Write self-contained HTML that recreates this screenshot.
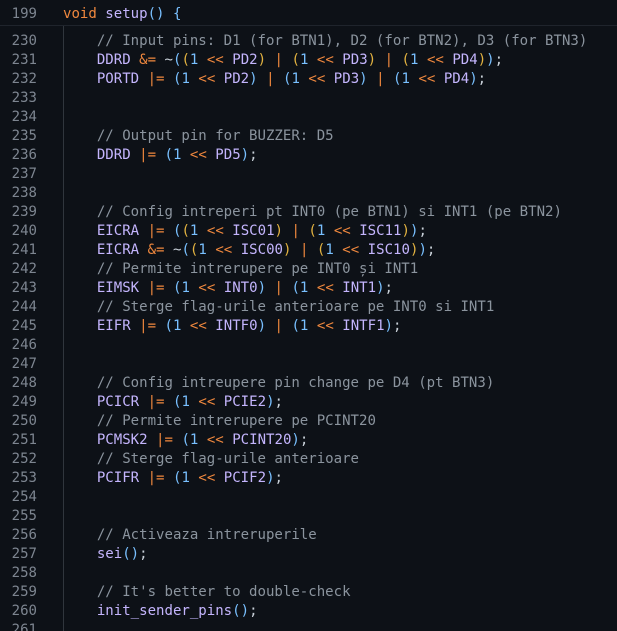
<!DOCTYPE html>
<html><head><meta charset="utf-8"><style>
html,body{margin:0;padding:0;background:#0d1117;width:617px;height:631px;overflow:hidden}
body{position:relative;font-family:"DejaVu Sans Mono","Liberation Mono",monospace;font-size:14.05px;color:#c9d1d9}
.l{position:absolute;left:0;height:19px;line-height:19px;white-space:pre;width:617px}
.n{position:absolute;left:0;width:37px;text-align:right;color:#7d8590}
.c{position:absolute;left:63px}
.i{color:#c4b5fd}.o{color:#f0883e}.p{color:#79c0ff}.g{color:#e3b341}.m{color:#8b949e}.k{color:#f0883e}.f{color:#c4b5fd}
#hdr{position:absolute;left:0;top:0;width:617px;height:25px;background:#0d1117;border-bottom:1px solid #1f242c;z-index:2}
#guide{position:absolute;left:63px;top:25px;width:1px;height:606px;background:#30363d}
</style></head><body>
<div id="hdr">
<div class="l" style="top:-15px"><span class="n">198</span><span class="c m">// ...</span></div>
<div class="l" style="top:5px"><span class="n">199</span><span class="c"><span class="k">void</span> <span class="f">setup</span><span class="p">()</span> <span class="p">{</span></span></div>
</div>
<div id="guide"></div>
<div class="l" style="top:12.5px"><span class="n">229</span></div>
<div class="l" style="top:31.5px"><span class="n">230</span><span class="c">    <span class="m">// Input pins: D1 (for BTN1), D2 (for BTN2), D3 (for BTN3)</span></span></div>
<div class="l" style="top:50.5px"><span class="n">231</span><span class="c">    <span class="i">DDRD</span> <span class="o">&amp;=</span> ~<span class="p">(</span><span class="g">(</span><span class="p">1</span> <span class="o">&lt;&lt;</span> <span class="i">PD2</span><span class="g">)</span> <span class="o">|</span> <span class="g">(</span><span class="p">1</span> <span class="o">&lt;&lt;</span> <span class="i">PD3</span><span class="g">)</span> <span class="o">|</span> <span class="g">(</span><span class="p">1</span> <span class="o">&lt;&lt;</span> <span class="i">PD4</span><span class="g">)</span><span class="p">)</span>;</span></div>
<div class="l" style="top:69.5px"><span class="n">232</span><span class="c">    <span class="i">PORTD</span> <span class="o">|=</span> <span class="p">(1</span> <span class="o">&lt;&lt;</span> <span class="i">PD2</span><span class="p">)</span> <span class="o">|</span> <span class="p">(1</span> <span class="o">&lt;&lt;</span> <span class="i">PD3</span><span class="p">)</span> <span class="o">|</span> <span class="p">(1</span> <span class="o">&lt;&lt;</span> <span class="i">PD4</span><span class="p">)</span>;</span></div>
<div class="l" style="top:88.5px"><span class="n">233</span></div>
<div class="l" style="top:107.5px"><span class="n">234</span></div>
<div class="l" style="top:126.5px"><span class="n">235</span><span class="c">    <span class="m">// Output pin for BUZZER: D5</span></span></div>
<div class="l" style="top:145.5px"><span class="n">236</span><span class="c">    <span class="i">DDRD</span> <span class="o">|=</span> <span class="p">(1</span> <span class="o">&lt;&lt;</span> <span class="i">PD5</span><span class="p">)</span>;</span></div>
<div class="l" style="top:164.5px"><span class="n">237</span></div>
<div class="l" style="top:183.5px"><span class="n">238</span></div>
<div class="l" style="top:202.5px"><span class="n">239</span><span class="c">    <span class="m">// Config intreperi pt INT0 (pe BTN1) si INT1 (pe BTN2)</span></span></div>
<div class="l" style="top:221.5px"><span class="n">240</span><span class="c">    <span class="i">EICRA</span> <span class="o">|=</span> <span class="p">(</span><span class="g">(</span><span class="p">1</span> <span class="o">&lt;&lt;</span> <span class="i">ISC01</span><span class="g">)</span> <span class="o">|</span> <span class="g">(</span><span class="p">1</span> <span class="o">&lt;&lt;</span> <span class="i">ISC11</span><span class="g">)</span><span class="p">)</span>;</span></div>
<div class="l" style="top:240.5px"><span class="n">241</span><span class="c">    <span class="i">EICRA</span> <span class="o">&amp;=</span> ~<span class="p">(</span><span class="g">(</span><span class="p">1</span> <span class="o">&lt;&lt;</span> <span class="i">ISC00</span><span class="g">)</span> <span class="o">|</span> <span class="g">(</span><span class="p">1</span> <span class="o">&lt;&lt;</span> <span class="i">ISC10</span><span class="g">)</span><span class="p">)</span>;</span></div>
<div class="l" style="top:259.5px"><span class="n">242</span><span class="c">    <span class="m">// Permite intrerupere pe INT0 și INT1</span></span></div>
<div class="l" style="top:278.5px"><span class="n">243</span><span class="c">    <span class="i">EIMSK</span> <span class="o">|=</span> <span class="p">(1</span> <span class="o">&lt;&lt;</span> <span class="i">INT0</span><span class="p">)</span> <span class="o">|</span> <span class="p">(1</span> <span class="o">&lt;&lt;</span> <span class="i">INT1</span><span class="p">)</span>;</span></div>
<div class="l" style="top:297.5px"><span class="n">244</span><span class="c">    <span class="m">// Sterge flag-urile anterioare pe INT0 si INT1</span></span></div>
<div class="l" style="top:316.5px"><span class="n">245</span><span class="c">    <span class="i">EIFR</span> <span class="o">|=</span> <span class="p">(1</span> <span class="o">&lt;&lt;</span> <span class="i">INTF0</span><span class="p">)</span> <span class="o">|</span> <span class="p">(1</span> <span class="o">&lt;&lt;</span> <span class="i">INTF1</span><span class="p">)</span>;</span></div>
<div class="l" style="top:335.5px"><span class="n">246</span></div>
<div class="l" style="top:354.5px"><span class="n">247</span></div>
<div class="l" style="top:373.5px"><span class="n">248</span><span class="c">    <span class="m">// Config intreupere pin change pe D4 (pt BTN3)</span></span></div>
<div class="l" style="top:392.5px"><span class="n">249</span><span class="c">    <span class="i">PCICR</span> <span class="o">|=</span> <span class="p">(1</span> <span class="o">&lt;&lt;</span> <span class="i">PCIE2</span><span class="p">)</span>;</span></div>
<div class="l" style="top:411.5px"><span class="n">250</span><span class="c">    <span class="m">// Permite intrerupere pe PCINT20</span></span></div>
<div class="l" style="top:430.5px"><span class="n">251</span><span class="c">    <span class="i">PCMSK2</span> <span class="o">|=</span> <span class="p">(1</span> <span class="o">&lt;&lt;</span> <span class="i">PCINT20</span><span class="p">)</span>;</span></div>
<div class="l" style="top:449.5px"><span class="n">252</span><span class="c">    <span class="m">// Sterge flag-urile anterioare</span></span></div>
<div class="l" style="top:468.5px"><span class="n">253</span><span class="c">    <span class="i">PCIFR</span> <span class="o">|=</span> <span class="p">(1</span> <span class="o">&lt;&lt;</span> <span class="i">PCIF2</span><span class="p">)</span>;</span></div>
<div class="l" style="top:487.5px"><span class="n">254</span></div>
<div class="l" style="top:506.5px"><span class="n">255</span></div>
<div class="l" style="top:525.5px"><span class="n">256</span><span class="c">    <span class="m">// Activeaza intreruperile</span></span></div>
<div class="l" style="top:544.5px"><span class="n">257</span><span class="c">    <span class="f">sei</span><span class="p">()</span>;</span></div>
<div class="l" style="top:563.5px"><span class="n">258</span></div>
<div class="l" style="top:582.5px"><span class="n">259</span><span class="c">    <span class="m">// It's better to double-check</span></span></div>
<div class="l" style="top:601.5px"><span class="n">260</span><span class="c">    <span class="f">init_sender_pins</span><span class="p">()</span>;</span></div>
<div class="l" style="top:620.5px"><span class="n">261</span></div>
</body></html>
